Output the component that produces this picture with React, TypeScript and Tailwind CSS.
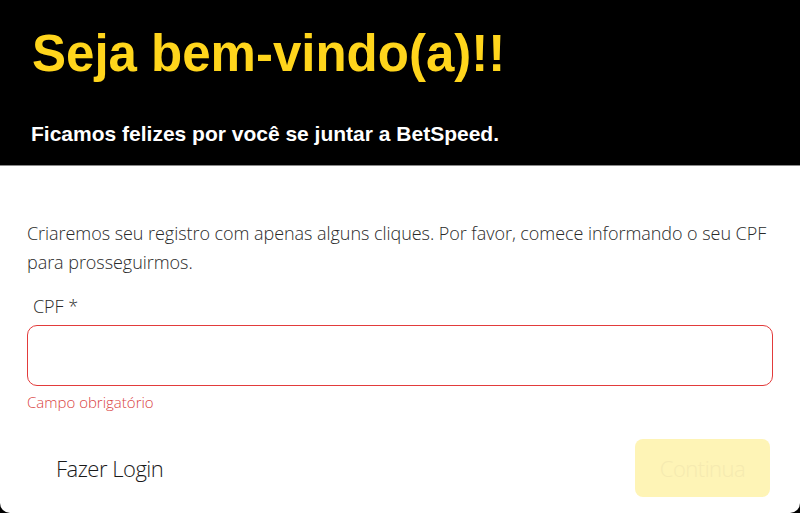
import React from "react";

export default function App() {
  return (
    <div className="w-[800px] h-[513px] bg-black overflow-hidden">
      <div className="w-full h-full bg-white rounded-b-[10px] flex flex-col overflow-hidden">
        <div className="h-[166px] bg-black border-b border-[#8a8a8a] px-[31px] pt-[24px] flex flex-col" style={{ fontFamily: '"Liberation Sans", Arial, sans-serif' }}>
          <h1 className="text-[51px] leading-[60px] font-bold text-[#FFD51C] pl-[1px]">Seja bem-vindo(a)!!</h1>
          <p className="mt-[38px] text-[21px] leading-[24px] font-bold text-white">Ficamos felizes por você se juntar a BetSpeed.</p>
        </div>
        <div className="flex-1 flex flex-col px-[27px] pt-[53px] font-light" style={{ fontFamily: '"Open Sans", sans-serif' }}>
          <p className="text-[18px] leading-[29px] text-[#2a2a2a] tracking-[-0.05px] pr-[4px]">
            Criaremos seu registro com apenas alguns cliques. Por favor, comece informando o seu CPF para prosseguirmos.
          </p>
          <label className="mt-[19px] pl-[6px] text-[18px] leading-[20px] text-[#2a2a2a] tracking-[-0.05px]">CPF *</label>
          <input className="mt-[9px] h-[61px] w-[746px] rounded-[10px] border border-[#e23b3b] outline-none" />
          <span className="mt-[7px] text-[15px] leading-[18px] text-[#d9423f] tracking-[0px]">Campo obrigatório</span>
          <div className="mt-[28px] flex items-center justify-between pr-[3px]">
            <button className="pl-[29px] text-[22px] text-[#1a1a1a] tracking-[-0.5px]">Fazer Login</button>
            <button className="w-[135px] h-[58px] rounded-[8px] bg-[#FEF4B6] text-[22px] text-[#f5eab0] tracking-[-0.5px]">Continua</button>
          </div>
        </div>
      </div>
    </div>
  );
}
